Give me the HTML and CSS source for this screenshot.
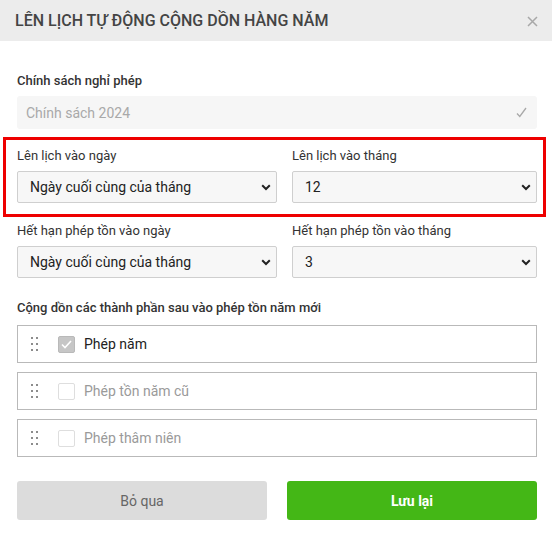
FILE: index.html
```html
<!DOCTYPE html>
<html lang="vi">
<head>
<meta charset="utf-8">
<title>Lên lịch tự động cộng dồn hàng năm</title>
<link rel="stylesheet" href="styles.css">
</head>
<body>
<div class="modal">
  <div class="modal-header">
    <h1 class="modal-title">LÊN LỊCH TỰ ĐỘNG CỘNG DỒN HÀNG NĂM</h1>
    <button class="close" type="button" aria-label="Đóng">
      <svg width="11" height="11" viewBox="0 0 11 11"><path d="M1 1L10 10M10 1L1 10" stroke="#a8a8a8" stroke-width="1.5" fill="none"/></svg>
    </button>
  </div>
  <div class="modal-body">
    <div class="field">
      <label class="label label-strong">Chính sách nghỉ phép</label>
      <div class="readonly-input">
        <span>Chính sách 2024</span>
        <svg width="11" height="11" viewBox="0 0 11 11"><path d="M1 6.5L3.8 9.5L10 1" stroke="#a8a8a8" stroke-width="1.3" fill="none"/></svg>
      </div>
    </div>

    <div class="highlight">
      <div class="row">
        <div class="col">
          <label class="label">Lên lịch vào ngày</label>
          <div class="select-wrap">
            <select class="select"><option>Ngày cuối cùng của tháng</option></select>
            <svg class="chev" width="10" height="7" viewBox="0 0 10 7"><path d="M1.2 1.3L5 5L8.8 1.3" stroke="#222" stroke-width="2" fill="none"/></svg>
          </div>
        </div>
        <div class="col col-right">
          <label class="label">Lên lịch vào tháng</label>
          <div class="select-wrap">
            <select class="select"><option>12</option></select>
            <svg class="chev" width="10" height="7" viewBox="0 0 10 7"><path d="M1.2 1.3L5 5L8.8 1.3" stroke="#222" stroke-width="2" fill="none"/></svg>
          </div>
        </div>
      </div>
    </div>

    <div class="row row-second">
      <div class="col">
        <label class="label">Hết hạn phép tồn vào ngày</label>
        <div class="select-wrap">
          <select class="select"><option>Ngày cuối cùng của tháng</option></select>
          <svg class="chev" width="10" height="7" viewBox="0 0 10 7"><path d="M1.2 1.3L5 5L8.8 1.3" stroke="#222" stroke-width="2" fill="none"/></svg>
        </div>
      </div>
      <div class="col col-right">
        <label class="label">Hết hạn phép tồn vào tháng</label>
        <div class="select-wrap">
          <select class="select"><option>3</option></select>
          <svg class="chev" width="10" height="7" viewBox="0 0 10 7"><path d="M1.2 1.3L5 5L8.8 1.3" stroke="#222" stroke-width="2" fill="none"/></svg>
        </div>
      </div>
    </div>

    <div class="field field-list">
      <label class="label label-strong">Cộng dồn các thành phần sau vào phép tồn năm mới</label>
      <ul class="sort-list">
        <li class="sort-item">
          <svg class="handle" width="8" height="14" viewBox="0 0 8 14"><g fill="#8c8c8c"><rect x="0" y="0" width="2" height="2"/><rect x="5" y="0" width="2" height="2"/><rect x="0" y="6" width="2" height="2"/><rect x="5" y="6" width="2" height="2"/><rect x="0" y="12" width="2" height="2"/><rect x="5" y="12" width="2" height="2"/></g></svg>
          <span class="checkbox checked">
            <svg width="11" height="9" viewBox="0 0 11 9"><path d="M1 4.5L4 7.5L10 1" stroke="#fff" stroke-width="1.6" fill="none"/></svg>
          </span>
          <span class="item-text">Phép năm</span>
        </li>
        <li class="sort-item">
          <svg class="handle" width="8" height="14" viewBox="0 0 8 14"><g fill="#8c8c8c"><rect x="0" y="0" width="2" height="2"/><rect x="5" y="0" width="2" height="2"/><rect x="0" y="6" width="2" height="2"/><rect x="5" y="6" width="2" height="2"/><rect x="0" y="12" width="2" height="2"/><rect x="5" y="12" width="2" height="2"/></g></svg>
          <span class="checkbox"></span>
          <span class="item-text muted">Phép tồn năm cũ</span>
        </li>
        <li class="sort-item">
          <svg class="handle" width="8" height="14" viewBox="0 0 8 14"><g fill="#8c8c8c"><rect x="0" y="0" width="2" height="2"/><rect x="5" y="0" width="2" height="2"/><rect x="0" y="6" width="2" height="2"/><rect x="5" y="6" width="2" height="2"/><rect x="0" y="12" width="2" height="2"/><rect x="5" y="12" width="2" height="2"/></g></svg>
          <span class="checkbox"></span>
          <span class="item-text muted">Phép thâm niên</span>
        </li>
      </ul>
    </div>

    <div class="actions">
      <button class="btn btn-cancel" type="button">Bỏ qua</button>
      <button class="btn btn-save" type="button">Lưu lại</button>
    </div>
  </div>
</div>
</body>
</html>
```

FILE: styles.css
```css
* { box-sizing: border-box; }
html, body { margin: 0; padding: 0; background: #fff; }
body {
  font-family: Roboto, "Liberation Sans", Arial, sans-serif;
  color: #333;
  width: 552px;
}
.modal { width: 552px; }
.modal-header {
  height: 41px;
  background: #ececec;
  display: flex;
  align-items: center;
  justify-content: space-between;
  padding: 0 14px 0 15px;
}
.modal-title {
  margin: 0;
  font-size: 16px;
  font-weight: 500;
  color: #444;
  line-height: 20px;
  padding-top: 1px;
}
.close {
  border: 0;
  background: none;
  padding: 0;
  width: 11px;
  height: 11px;
  display: flex;
  margin-top: 1px;
}
.modal-body { padding: 32px 15px 0 17px; }
.label {
  display: block;
  font-size: 13px;
  line-height: 16px;
  color: #333;
  margin-bottom: 7px;
}
.label-strong { font-weight: 500; }
.readonly-input {
  height: 33px;
  background: #f6f6f6;
  border-radius: 3px;
  display: flex;
  align-items: center;
  justify-content: space-between;
  padding: 0 10px 0 9px;
  font-size: 14px;
  color: #a9a9a9;
}
.highlight {
  margin: 8px -9px 0 -14px;
  padding: 8px 6px 11px 11px;
  border: 3px solid #ee0000;
}
.row {
  display: grid;
  grid-template-columns: 1fr 1fr;
}
.col-right { padding-left: 15px; }
.row-second { margin-top: 6px; }
.select-wrap { position: relative; }
.select {
  appearance: none;
  -webkit-appearance: none;
  width: 100%;
  height: 32px;
  border: 1px solid #cfcfcf;
  border-radius: 2px;
  background: #f7f7f7;
  font-family: inherit;
  font-size: 14px;
  color: #222;
  padding: 0 28px 0 12px;
  margin: 0;
}
.chev {
  position: absolute;
  right: 6px;
  top: 13px;
  pointer-events: none;
}
.field-list { margin-top: 22px; }
.field-list .label { margin-bottom: 9px; }
.sort-list {
  list-style: none;
  margin: 0;
  padding: 0;
  display: flex;
  flex-direction: column;
  gap: 9px;
}
.sort-item {
  height: 38px;
  border: 1px solid #b9b9b9;
  display: flex;
  align-items: center;
  padding-left: 13px;
}
.handle { flex: none; }
.checkbox {
  width: 17px;
  height: 17px;
  border: 1px solid #dedede;
  border-radius: 2px;
  background: #fff;
  margin-left: 19px;
  display: flex;
  align-items: center;
  justify-content: center;
  flex: none;
}
.checkbox.checked {
  background: #c6c6c6;
  border-color: #b9b9b9;
}
.item-text {
  margin-left: 9px;
  font-size: 14px;
  color: #222;
}
.item-text.muted { color: #9a9a9a; }
.actions {
  margin-top: 24px;
  display: grid;
  grid-template-columns: 1fr 1fr;
  gap: 20px;
}
.btn {
  height: 39px;
  border: 0;
  border-radius: 3px;
  font-family: inherit;
  font-size: 14px;
}
.btn-cancel { background: #dcdcdc; color: #666; }
.btn-save { background: #44b716; color: #fff; font-weight: 700; }
```
